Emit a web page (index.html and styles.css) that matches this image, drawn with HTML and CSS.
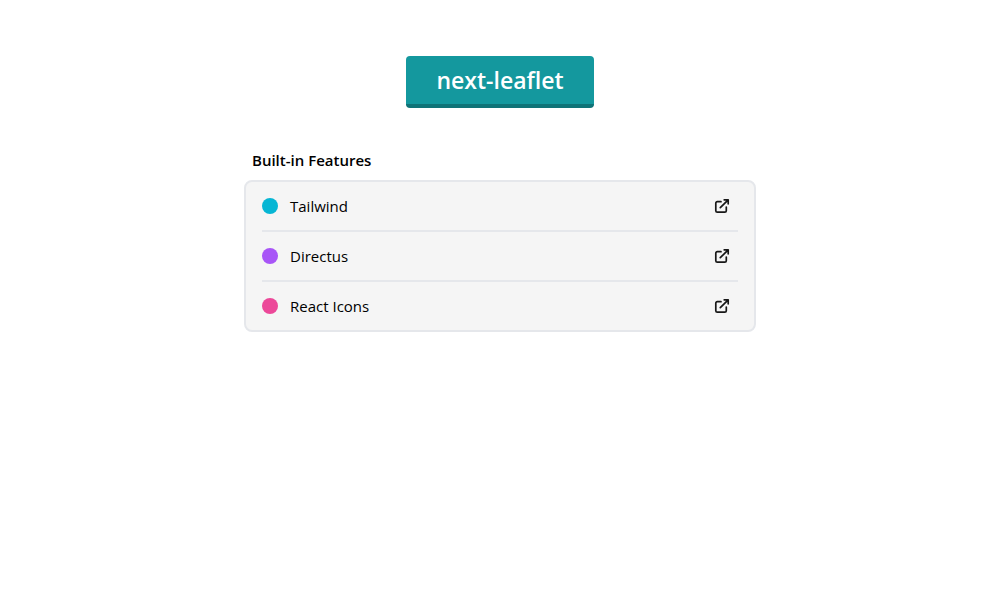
FILE: index.html
```html
<!DOCTYPE html>
<html lang="en">
<head>
<meta charset="utf-8">
<meta name="viewport" content="width=device-width, initial-scale=1">
<title>next-leaflet</title>
<link rel="stylesheet" href="styles.css">
</head>
<body>
<svg class="sprite" aria-hidden="true">
  <symbol id="external" viewBox="0 0 18 18">
    <path stroke-width="1.7" d="M8 4.700H4.300A1.500 1.500 0 0 0 2.800 6.200V13.700A1.500 1.500 0 0 0 4.300 15.200H11.800A1.500 1.500 0 0 0 13.300 13.700V10"/>
    <path stroke-width="1.7" d="M7.300 10.700L15.200 2.800M11.200 2.800H15.200V6.800"/>
  </symbol>
</svg>
<main class="page">
  <h1 class="title">next-leaflet</h1>
  <section class="features">
    <h2 class="heading">Built-in Features</h2>
    <ul class="list">
      <li class="item"><span class="dot cyan"></span><span class="name">Tailwind</span><a class="link" href="#tailwind" aria-label="Open Tailwind"><svg class="icon"><use href="#external"/></svg></a></li>
      <li class="item"><span class="dot purple"></span><span class="name">Directus</span><a class="link" href="#directus" aria-label="Open Directus"><svg class="icon"><use href="#external"/></svg></a></li>
      <li class="item"><span class="dot pink"></span><span class="name">React Icons</span><a class="link" href="#react-icons" aria-label="Open React Icons"><svg class="icon"><use href="#external"/></svg></a></li>
    </ul>
  </section>
</main>
</body>
</html>
```
FILE: styles.css
```css
* { box-sizing: border-box; margin: 0; padding: 0; }
body { background: #fff; color: #000; font: 15px/24px "Segoe UI", "Open Sans", "Noto Sans", sans-serif; }
.sprite { position: absolute; width: 0; height: 0; }
.page { display: flex; flex-direction: column; align-items: center; gap: 40px; padding: 56px 16px; }
.title { padding: 8px 30px; border-bottom: 4px solid #0f7377; border-radius: 4px; background: #14989e; color: #fff; font-size: 23px; line-height: 32px; font-weight: 600; }
.features { width: 100%; max-width: 512px; }
.heading { padding: 0 8px; margin-bottom: 8px; font-size: 15px; line-height: 24px; font-weight: 600; }
.list { list-style: none; padding: 0 16px; border: 2px solid #e5e7eb; border-radius: 8px; background: #f5f5f5; }
.item { display: flex; align-items: center; height: 50px; border-bottom: 2px solid #e5e7eb; }
.item:last-child { border-bottom: 0; height: 48px; }
.dot { width: 16px; height: 16px; border-radius: 50%; }
.cyan { background: #06b6d4; }
.purple { background: #a855f7; }
.pink { background: #ec4899; }
.name { flex: 1; margin-left: 12px; }
.link { display: flex; padding: 7px; color: #171717; }
.icon { width: 18px; height: 18px; fill: none; stroke: currentColor; stroke-linecap: round; stroke-linejoin: round; }
```
